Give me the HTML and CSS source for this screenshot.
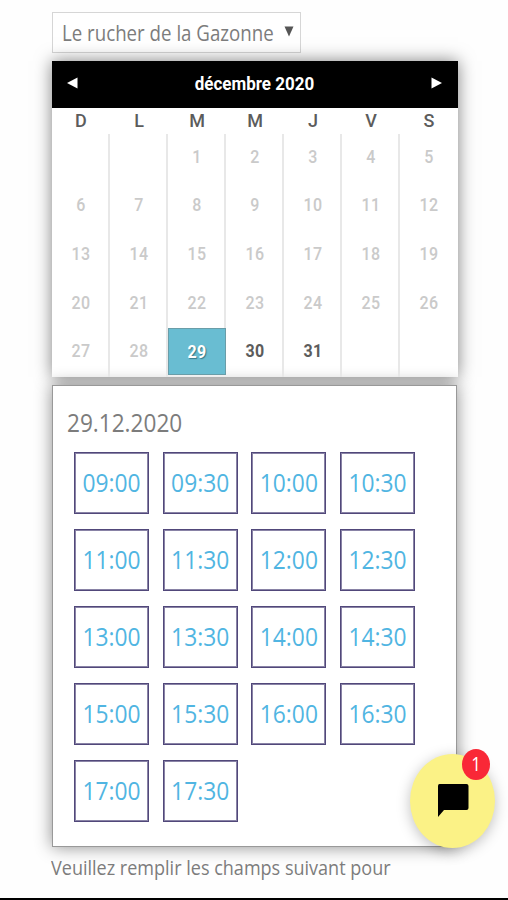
FILE: index.html
```html
<!DOCTYPE html>
<html lang="fr">
<head>
    <meta charset="UTF-8">
    <meta name="viewport" content="width=device-width, initial-scale=1.0">
    <title>Réservation</title>
    <link rel="stylesheet" href="styles.css">
</head>
<body>
    <main class="booking">
        <div class="location">
            <span class="tall">Le rucher de la Gazonne</span>
            <svg class="caret" width="10" height="11" viewBox="0 0 10 11"><path d="M0.5 0.5h9L5 10.5z" fill="#555"/></svg>
        </div>

        <section class="calendar">
            <header class="calendar-header">
                <svg width="11" height="12" viewBox="0 0 11 12"><path d="M10.5 0.5v11L0 6z" fill="#fff"/></svg>
                <h1 class="tall">décembre 2020</h1>
                <svg width="11" height="12" viewBox="0 0 11 12"><path d="M0.5 0.5v11L11 6z" fill="#fff"/></svg>
            </header>
            <div class="weekdays">
                <span>D</span><span>L</span><span>M</span><span>M</span><span>J</span><span>V</span><span>S</span>
            </div>
            <div class="days" id="days"></div>
        </section>

        <section class="slots">
            <h2><span class="tall">29.12.2020</span></h2>
            <div class="slot-list" id="slots"></div>
        </section>

        <p class="note"><span class="tall">Veuillez remplir les champs suivant pour</span></p>
    </main>

    <div class="chat">
        <svg width="32" height="36" viewBox="0 0 32 36"><path d="M2.5 1h27q2 0 2 2v22q0 2-2 2H7l-6 7V3q0-2 1.500-2z" fill="#000"/></svg>
        <span class="badge"><span class="tall">1</span></span>
    </div>
    <div class="bottom-bar"></div>

    <script>
        const days = document.getElementById('days');
        // the month starts on a Tuesday
        for (let i = 0; i < 35; i++) {
            const day = i - 1;
            const cell = document.createElement('div');
            cell.className = 'day';
            if (day >= 1 && day <= 31) {
                cell.innerHTML = `<span class="tall">${day}</span>`;
            }
            if (day === 29) cell.classList.add('selected');
            if (day > 29) cell.classList.add('open');
            days.appendChild(cell);
        }

        const slots = document.getElementById('slots');
        for (let h = 9; h <= 17; h++) {
            ['00', '30'].forEach(m => {
                const slot = document.createElement('div');
                slot.className = 'slot';
                slot.innerHTML = `<span class="tall">${String(h).padStart(2, '0')}:${m}</span>`;
                slots.appendChild(slot);
            });
        }
    </script>
</body>
</html>
```
FILE: styles.css
```css
* {
    box-sizing: border-box;
}

body {
    margin: 0;
    height: 900px;
    overflow: hidden;
    background-color: #fefefe;
    font-family: 'Open Sans', sans-serif;
    color: #7c7c7c;
}

.tall {
    display: inline-block;
    transform: scaleY(1.12);
}

.booking {
    width: 406px;
    margin-left: 52px;
    padding-top: 12px;
}

.location {
    display: flex;
    align-items: center;
    justify-content: space-between;
    width: 249px;
    height: 41px;
    padding: 0 6px 1px 9px;
    border: 1px solid #d6d6d6;
    background-color: #fff;
    font-size: 18.7px;
    white-space: nowrap;
}

.caret {
    margin-top: -2px;
}

.calendar {
    height: 316px;
    margin-top: 8px;
    background-color: #fff;
    box-shadow: 0 0 16px rgba(0, 0, 0, 0.5);
    font-family: Roboto, sans-serif;
}

.calendar-header {
    display: flex;
    align-items: center;
    justify-content: space-between;
    height: 47px;
    padding: 0 16px 3px 15px;
    background-color: #000;
    color: #fff;
}

.calendar-header h1 {
    margin: 0;
    font-size: 17px;
    font-weight: 700;
}

.weekdays {
    display: grid;
    grid-template-columns: repeat(7, 1fr);
    height: 26px;
    line-height: 25px;
    text-align: center;
    font-size: 18px;
    font-weight: 500;
    color: #5c5c5c;
}

.days {
    display: grid;
    grid-template-columns: repeat(7, 1fr);
    grid-template-rows: repeat(5, 1fr);
    height: 243px;
}

.day {
    display: flex;
    align-items: center;
    justify-content: center;
    padding: 0 0 4px 2px;
    border-right: 2px solid #e8e8e8;
    font-size: 16px;
    font-weight: 500;
    letter-spacing: 0.3px;
    color: #cacaca;
}

.day:nth-child(7n) {
    border-right: 0;
    padding-left: 0;
}

.day.selected {
    margin-bottom: 2px;
    padding: 0;
    border: 1px solid #6a9da8;
    background-color: #69bdd2;
    color: #fff;
    font-weight: 700;
    text-shadow: 1px 1px 1px #387887;
}

.day.open {
    color: #5c5c5c;
    font-weight: 700;
}

.slots {
    width: 405px;
    height: 462px;
    margin-top: 8px;
    padding: 21px 0 0 21px;
    border: 1px solid #999;
    background-color: #fff;
    box-shadow: 0 0 16px rgba(0, 0, 0, 0.45);
}

.slots h2 {
    margin: 0 0 13px -7px;
    font-size: 22.6px;
    font-weight: 400;
    line-height: 32px;
}

.slot-list {
    display: grid;
    grid-template-columns: repeat(4, 75px);
    grid-auto-rows: 62px;
    gap: 15px 13.7px;
}

.slot {
    display: flex;
    align-items: center;
    justify-content: center;
    padding-bottom: 2px;
    border: 1px solid #51487a;
    box-shadow: inset 0 0 0 1px #8983a6;
    font-size: 22.8px;
    color: #50b5e2;
}

.note {
    margin: 6px 0 0 -1px;
    font-size: 18.05px;
    line-height: 28px;
    white-space: nowrap;
}

.chat {
    position: absolute;
    left: 410px;
    top: 754px;
    display: flex;
    align-items: center;
    justify-content: center;
    width: 85px;
    height: 94px;
    border-radius: 50%;
    background-color: #fbf286;
    box-shadow: 0 3px 14px rgba(0, 0, 0, 0.25);
}

.badge {
    position: absolute;
    left: 52px;
    top: -5px;
    width: 28px;
    height: 31px;
    border-radius: 50%;
    background-color: #f92837;
    color: #fff;
    font-size: 17px;
    line-height: 30px;
    text-align: center;
}

.bottom-bar {
    position: absolute;
    left: 0;
    top: 898px;
    width: 100%;
    height: 2px;
    background-color: #000;
}
```
